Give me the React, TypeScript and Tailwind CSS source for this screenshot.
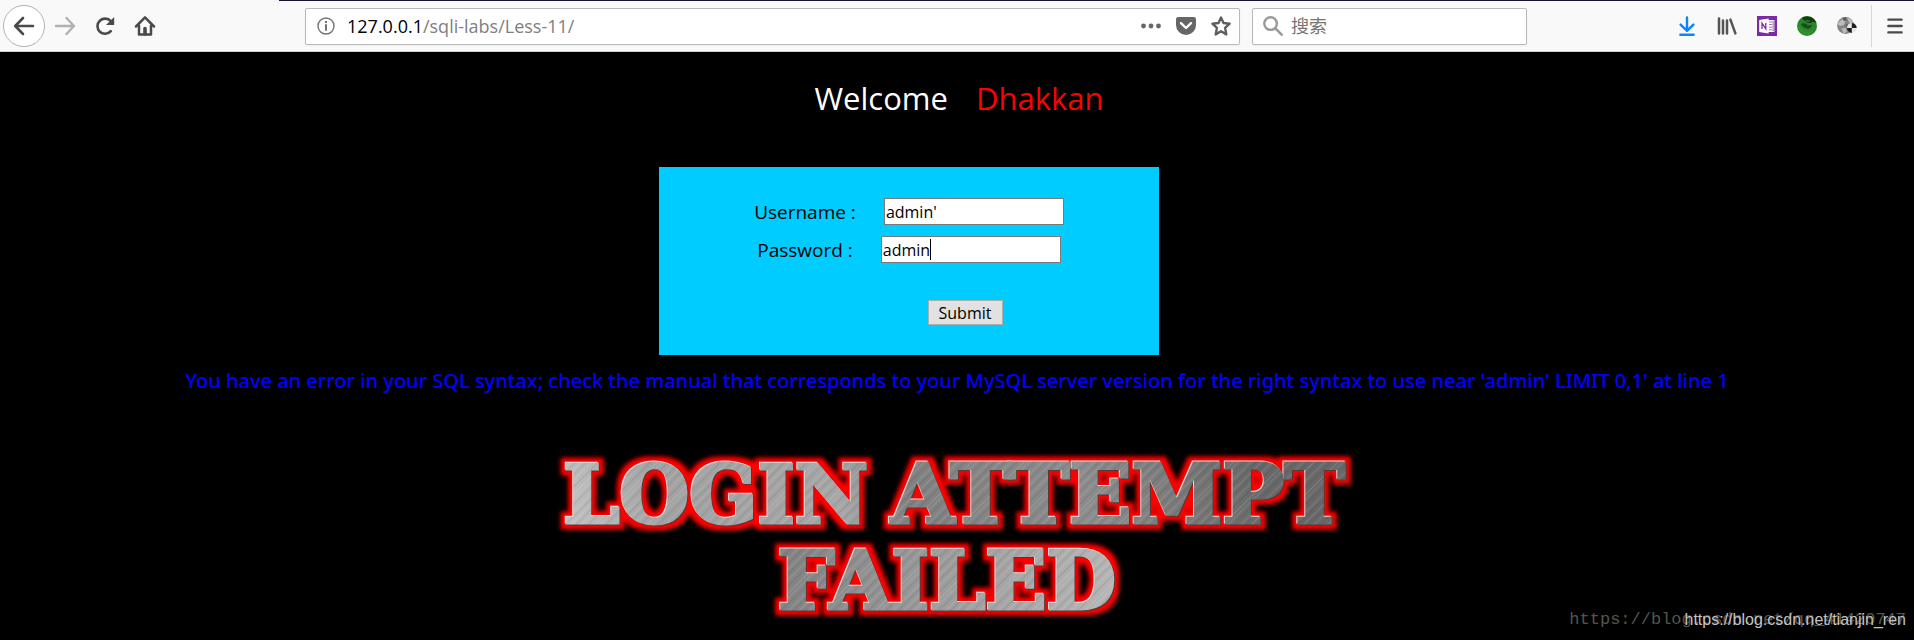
import { useState } from 'react';

const iconButton = 'flex h-10 w-10 shrink-0 items-center justify-center';

const BackIcon = () => (
  <svg width="22" height="22" viewBox="0 0 22 22" fill="none" stroke="#4a4a4a" strokeWidth="2.6" strokeLinecap="round" strokeLinejoin="round" aria-hidden="true">
    <path d="M20 11H2.5M10 3L2.2 11L10 19" />
  </svg>
);

const ForwardIcon = () => (
  <svg width="22" height="22" viewBox="0 0 22 22" fill="none" stroke="#b1b1b1" strokeWidth="2.4" strokeLinecap="round" strokeLinejoin="round" aria-hidden="true">
    <path d="M2 11H20M12.5 3L20 11L12.5 19" />
  </svg>
);

const ReloadIcon = () => (
  <svg width="22" height="22" viewBox="0 0 22 22" fill="none" aria-hidden="true">
    <path d="M16.8 16.2A7.6 7.6 0 1 1 16.8 6.2" stroke="#4a4a4a" strokeWidth="2.6" strokeLinecap="round" />
    <path d="M20.2 2v7.4a.7.7 0 0 1-.7.7H12Z" fill="#4a4a4a" />
  </svg>
);

const HomeIcon = () => (
  <svg width="22" height="22" viewBox="0 0 22 22" fill="none" stroke="#4a4a4a" strokeLinecap="round" strokeLinejoin="round" aria-hidden="true">
    <path d="M2 11.5L11 2.4L20 11.5" strokeWidth="2.5" />
    <path d="M5 10.5V19.4H17V10.5" strokeWidth="2.5" />
    <path d="M11 19V13.5" strokeWidth="3.6" />
  </svg>
);

const InfoIcon = () => (
  <svg width="18" height="18" viewBox="0 0 18 18" fill="none" aria-hidden="true">
    <circle cx="9" cy="9" r="8" stroke="#737373" strokeWidth="1.4" />
    <circle cx="9" cy="5" r="1.2" fill="#737373" />
    <path d="M9 8V13" stroke="#737373" strokeWidth="2" strokeLinecap="round" />
  </svg>
);

const DotsIcon = () => (
  <svg width="20" height="20" viewBox="0 0 20 20" fill="#666" aria-hidden="true">
    <circle cx="2.5" cy="10" r="2.4" />
    <circle cx="10" cy="10" r="2.4" />
    <circle cx="17.5" cy="10" r="2.4" />
  </svg>
);

const PocketIcon = () => (
  <svg width="20" height="20" viewBox="0 0 20 20" fill="none" aria-hidden="true">
    <path d="M2.2 1H17.8A2.2 2.2 0 0 1 20 3.2V9A10 10 0 0 1 0 9V3.2A2.2 2.2 0 0 1 2.2 1Z" fill="#666" />
    <path d="M5 7.2L10 12L15 7.2" stroke="#fff" strokeWidth="2.4" strokeLinecap="round" strokeLinejoin="round" />
  </svg>
);

const StarIcon = () => (
  <svg width="20" height="20" viewBox="0 0 20 20" fill="none" stroke="#5e5e5e" strokeWidth="2.4" strokeLinejoin="round" aria-hidden="true">
    <path d="M10 1.6L12.5 7L18.6 7.7L14.1 11.9L15.3 18.4L10 15.2L4.7 18.4L5.9 11.9L1.4 7.7L7.5 7Z" />
  </svg>
);

const SearchIcon = () => (
  <svg width="20" height="20" viewBox="0 0 20 20" fill="none" stroke="#999" className="shrink-0" aria-hidden="true">
    <circle cx="7.6" cy="7.6" r="6.3" strokeWidth="2.4" />
    <path d="M12.4 12.4L18.6 18.6" strokeWidth="2.6" strokeLinecap="round" />
  </svg>
);

const DownloadIcon = () => (
  <svg width="20" height="20" viewBox="0 0 20 20" fill="none" stroke="#0a84ff" strokeWidth="2.4" strokeLinecap="round" strokeLinejoin="round" aria-hidden="true">
    <path d="M10 1.4V14.6M3.6 8.6L10 14.8L16.4 8.6M3.4 18.8H16.6" />
  </svg>
);

const LibraryIcon = () => (
  <svg width="20" height="20" viewBox="0 0 20 20" fill="none" stroke="#555" strokeWidth="2.5" strokeLinecap="round" aria-hidden="true">
    <path d="M2 2.4V17.6M6 4.4V17.6M10 4.4V17.6M13.4 3.6L18.4 17.4" />
  </svg>
);

const OneNoteIcon = () => (
  <svg width="20" height="20" viewBox="0 0 20 20" aria-hidden="true">
    <path d="M0 0H20V20H0Z" fill="#7b2aa5" />
    <path d="M10 4H17.4V16H10Z" fill="#fff" />
    <path d="M12 6H15.4M12 8.6H15.4M12 11.2H15.4M12 13.8H15.4M16.2 4.6V15.4" stroke="#7b2aa5" strokeWidth=".7" fill="none" />
    <path d="M2.2 4L11.6 2.6V17.4L2.2 16Z" fill="#fff" />
    <path d="M5 13V7.2L8.8 12.8V7" stroke="#7b2aa5" strokeWidth="1.3" fill="none" />
  </svg>
);

const GreenFoxIcon = () => (
  <svg width="20" height="20" viewBox="0 0 20 20" aria-hidden="true">
    <circle cx="10" cy="10" r="10" fill="#2c852c" />
    <path d="M5 1.8A10 10 0 0 1 19.6 7.4Q17 4.6 14.5 6.6Q11 8 9 5.6Q6 4.8 5 1.8Z" fill="#123c14" />
    <path d="M4 8Q8 6 11 9.4L15 9Q14 13 10 12.6Q6 12 4 8Z" fill="#145018" />
    <path d="M1.4 5.4Q2.4 13 8 15.4Q14.6 17 17.6 10.6Q17.4 17 10.6 18.8Q3.4 18.4 1.2 12Z" fill="#338f33" />
    <path d="M8 4.6Q10.6 3.4 13.4 4.8Q11.4 7.2 8 4.6Z" fill="#347a38" />
  </svg>
);

const GlobeIcon = () => (
  <svg width="20" height="20" viewBox="0 0 20 20" aria-hidden="true">
    <circle cx="8.6" cy="9.4" r="8.5" fill="#858585" />
    <path d="M2 5.4L6 3L8.4 5.2L6.8 9L3.4 10L.6 8.6ZM10 1.6L14.6 3.6L16.4 7.2L12 6.6ZM4.6 12.6L9 12L9.8 16L6.6 17.4Z" fill="#bdbdbd" />
    <path d="M5.4 1.8L9 1L9.8 4.4L6.6 5ZM8.8 8.2L12 8L11.2 12L9 11.4Z" fill="#606060" />
    <circle cx="14.8" cy="12" r="4.9" fill="#e8e8e8" />
    <path d="M14.8 12V7.1A4.9 4.9 0 0 1 19.7 12ZM14.8 12V16.9A4.9 4.9 0 0 1 9.9 12Z" fill="#1f1f1f" />
  </svg>
);

const MenuIcon = () => (
  <svg width="16" height="20" viewBox="0 0 16 20" fill="none" stroke="#4a4a4a" strokeWidth="2.4" strokeLinecap="round" aria-hidden="true">
    <path d="M1.4 3.6H14.6M1.4 10H14.6M1.4 16.4H14.6" />
  </svg>
);

const tools = [
  { name: 'Downloads', icon: <DownloadIcon /> },
  { name: 'Library', icon: <LibraryIcon /> },
  { name: 'OneNote', icon: <OneNoteIcon /> },
  { name: 'Green fox', icon: <GreenFoxIcon /> },
  { name: 'Proxy', icon: <GlobeIcon /> },
];

const Toolbar = () => (
  <header className="border-b border-[#d0d0d0] bg-[#f9f9fa] font-['Open_Sans','Noto_Sans_CJK_SC',sans-serif]">
    <div className="ml-[279px] h-px bg-[#14142b]"></div>
    <div className="flex h-[50px] items-center">
      <div className="flex shrink-0 items-center">
        <button type="button" aria-label="Back" className="ml-[3px] flex h-[42px] w-[42px] items-center justify-center rounded-full border border-[#b4b4b4] bg-white">
          <BackIcon />
        </button>
        <button type="button" aria-label="Forward" disabled className={iconButton}><ForwardIcon /></button>
        <button type="button" aria-label="Reload" className={iconButton}><ReloadIcon /></button>
        <button type="button" aria-label="Home" className={iconButton}><HomeIcon /></button>
      </div>

      {/* Address bar */}
      <div className="mr-3 ml-[140px] flex h-[37px] min-w-0 flex-1 items-center rounded-xs border border-[#b9b9b9] bg-white pr-2 pl-[11px] shadow-xs">
        <InfoIcon />
        <a href="#" className="ml-3 flex-1 truncate text-[18px] text-[#808080]">
          <span className="text-black">127.0.0.1</span>/sqli-labs/Less-11/
        </a>
        <div className="flex items-center gap-[15px]">
          <button type="button" aria-label="Page actions"><DotsIcon /></button>
          <button type="button" aria-label="Save to Pocket"><PocketIcon /></button>
          <button type="button" aria-label="Bookmark this page"><StarIcon /></button>
        </div>
      </div>

      {/* Search bar */}
      <label className="mr-[140px] flex h-[37px] w-[275px] items-center gap-2 rounded-xs border border-[#b9b9b9] bg-white px-2.5 shadow-xs">
        <SearchIcon />
        <input type="text" aria-label="搜索" placeholder="搜索" className="w-full min-w-0 text-[18px] outline-none placeholder:text-[#757575]" />
      </label>

      <div className="flex shrink-0 items-center">
        {tools.map((tool) => (
          <button key={tool.name} type="button" aria-label={tool.name} className={iconButton}>
            {tool.icon}
          </button>
        ))}
        <button type="button" aria-label="Open menu" className="ml-1 flex h-[42px] w-[43px] items-center justify-center border-l border-[#d8d8d8] pl-1">
          <MenuIcon />
        </button>
      </div>
    </div>
  </header>
);

const LoginForm = () => {
  const [username, setUsername] = useState("admin'");
  const [password, setPassword] = useState('admin');

  return (
    <form
      className="mr-24 flex w-[500px] flex-col items-center bg-[#00ccff] pt-[31px] pb-[30px] text-black"
      onSubmit={(e) => e.preventDefault()}
    >
      <div className="flex items-center gap-7">
        <label htmlFor="uname" className="text-[19px] leading-6">Username :</label>
        <input
          id="uname"
          type="text"
          value={username}
          onChange={(e) => setUsername(e.target.value)}
          className="h-[27px] w-[180px] border border-[#7a7a7a] bg-white px-px text-[16px] outline-none"
        />
      </div>
      <div className="mt-[11px] flex items-center gap-7">
        <label htmlFor="passwd" className="text-[19px] leading-6">Password :</label>
        <div className="relative flex">
          <input
            id="passwd"
            type="text"
            value={password}
            onChange={(e) => setPassword(e.target.value)}
            className="h-[27px] w-[180px] border border-[#7a7a7a] bg-white px-px text-[16px] caret-transparent outline-none"
          />
          {/* Text cursor */}
          <span className="absolute top-[3px] left-[49px] h-[21px] w-px bg-black"></span>
        </div>
      </div>
      <button type="submit" className="mt-[37px] ml-28 h-[25px] w-[75px] border border-[#adadad] bg-[#e1e1e1] text-[16px] leading-5">
        Submit
      </button>
    </form>
  );
};

// Brushed metal lettering with a bevel and a red glow
const FailedBanner = () => (
  <svg width="830" height="180" viewBox="0 0 830 180" role="img" aria-label="Login attempt failed" className="max-w-full">
    <defs>
      <linearGradient id="steelTop" gradientUnits="userSpaceOnUse" x1="20" y1="90" x2="700" y2="-60">
        <stop offset="0" stopColor="#c4c4c4" />
        <stop offset=".15" stopColor="#a2a2a2" />
        <stop offset=".4" stopColor="#a6a6a6" />
        <stop offset=".5" stopColor="#808080" />
        <stop offset=".75" stopColor="#8c8c8c" />
        <stop offset="1" stopColor="#686868" />
      </linearGradient>
      <linearGradient id="steelBottom" gradientUnits="userSpaceOnUse" x1="230" y1="100" x2="570" y2="160">
        <stop offset="0" stopColor="#808080" />
        <stop offset=".5" stopColor="#9c9c9c" />
        <stop offset="1" stopColor="#b6b6b6" />
      </linearGradient>
      <pattern id="brush" width="60" height="37" patternUnits="userSpaceOnUse" patternTransform="rotate(-45)">
        <path d="M0 1.5H60M0 9H60M0 18.5H60M0 22H60M0 31H60" stroke="#fff" strokeOpacity=".14" />
        <path d="M0 5H60M0 13.5H60M0 26H60M0 34.5H60" stroke="#000" strokeOpacity=".1" />
      </pattern>
      <pattern id="metalTop" width="830" height="180" patternUnits="userSpaceOnUse">
        <rect width="830" height="180" fill="url(#steelTop)" />
        <rect width="830" height="180" fill="url(#brush)" />
      </pattern>
      <pattern id="metalBottom" width="830" height="180" patternUnits="userSpaceOnUse">
        <rect width="830" height="180" fill="url(#steelBottom)" />
        <rect width="830" height="180" fill="url(#brush)" />
      </pattern>
      <filter id="glow" filterUnits="userSpaceOnUse" x="0" y="0" width="830" height="180" colorInterpolationFilters="sRGB">
        <feMorphology in="SourceAlpha" operator="dilate" radius="5" result="fat" />
        <feGaussianBlur in="fat" stdDeviation="2" result="soft" />
        <feFlood floodColor="#ff0000" />
        <feComposite in2="soft" operator="in" result="red" />
        <feOffset in="SourceAlpha" dx="-1" dy="-1" result="up" />
        <feFlood floodColor="#f0dcdc" />
        <feComposite in2="up" operator="in" result="light" />
        <feOffset in="SourceAlpha" dx="1" dy="1" result="down" />
        <feFlood floodColor="#5c3434" />
        <feComposite in2="down" operator="in" result="dark" />
        <feMerge>
          <feMergeNode in="red" />
          <feMergeNode in="dark" />
          <feMergeNode in="light" />
          <feMergeNode in="SourceGraphic" />
        </feMerge>
      </filter>
    </defs>
    <g filter="url(#glow)" fontFamily="'DejaVu Serif', serif" fontWeight="700" fontSize="80" strokeWidth="3" textAnchor="middle">
      <text x="174" y="76" fill="url(#metalTop)" stroke="url(#metalTop)">LOGIN</text>
      <text x="576" y="76" fontSize="82" fill="url(#metalTop)" stroke="url(#metalTop)">ATTEMPT</text>
      <text x="405" y="162" fill="url(#metalBottom)" stroke="url(#metalBottom)">FAILED</text>
    </g>
  </svg>
);

export default function App() {
  return (
    <div className="relative flex min-h-screen flex-col overflow-hidden bg-black">
      <Toolbar />
      <main className="flex flex-1 flex-col items-center font-['Open_Sans','Noto_Sans_CJK_SC',sans-serif]">
        <h1 className="mt-6 flex gap-7 pl-1 text-[31px] leading-11 text-white">
          Welcome <span className="text-[#ff0000]">Dhakkan</span>
        </h1>
        <div className="mt-[47px]">
          <LoginForm />
        </div>
        <p className="mt-3 text-center font-['Noto_Sans',sans-serif] text-[20px] leading-7 font-medium text-[#0000ff]">
          You have an error in your SQL syntax; check the manual that corresponds to your MySQL server version for the right syntax to use near 'admin' LIMIT 0,1' at line 1
        </p>
        <div className="mt-[52px]">
          <FailedBanner />
        </div>
      </main>

      {/* Watermarks */}
      <span className="absolute right-2 bottom-2 font-['Liberation_Mono',monospace] text-[17px] leading-6 text-[#55554f]">
        https://blog.csdn.net/qq_41420747
      </span>
      <span className="absolute right-2 bottom-2 font-['Liberation_Sans',sans-serif] text-[16px] leading-6 text-[#c4c4c4]">
        https://blog.csdn.net/tianjin_ren
      </span>
    </div>
  );
}
